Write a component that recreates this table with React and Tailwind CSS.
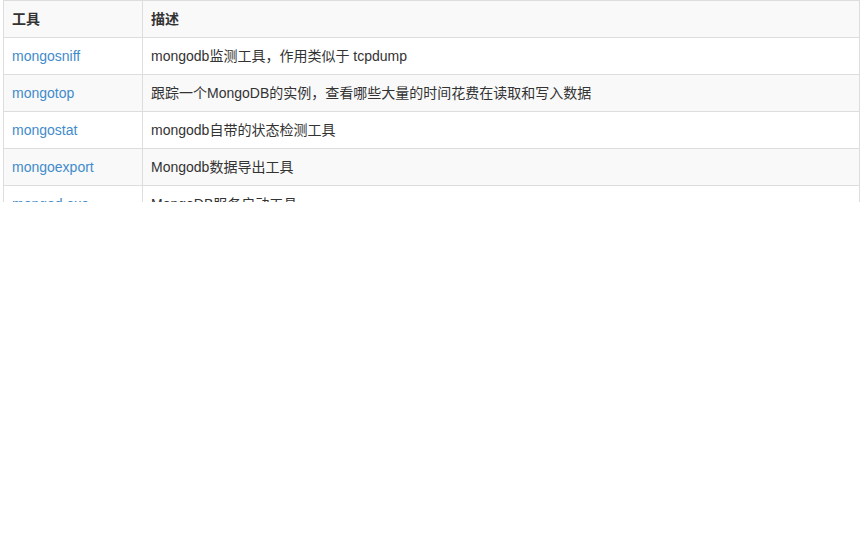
const rows = [
  { tool: 'mongosniff', desc: 'mongodb监测工具，作用类似于 tcpdump' },
  { tool: 'mongotop', desc: '跟踪一个MongoDB的实例，查看哪些大量的时间花费在读取和写入数据' },
  { tool: 'mongostat', desc: 'mongodb自带的状态检测工具' },
  { tool: 'mongoexport', desc: 'Mongodb数据导出工具' },
  { tool: 'mongod.exe', desc: 'MongoDB服务启动工具' },
];

export default function App() {
  return (
    <div className="w-[860px] h-[560px] bg-white">
      <div
        className="h-[202px] overflow-hidden pl-[3px] text-[14px] text-[#333]"
        style={{ fontFamily: '"Liberation Sans", "Noto Sans CJK SC", sans-serif' }}
      >
        <table className="w-[857px] border-collapse border border-[#ddd]">
          <thead>
            <tr className="bg-[#f9f9f9]">
              <th className="w-[139px] border border-[#ddd] px-2 py-2 text-left font-bold leading-5">工具</th>
              <th className="border border-[#ddd] px-2 py-2 text-left font-bold leading-5">描述</th>
            </tr>
          </thead>
          <tbody>
            {rows.map((r, i) => (
              <tr key={r.tool} className={i % 2 === 1 ? 'bg-[#f9f9f9]' : 'bg-white'}>
                <td className="border border-[#ddd] px-2 py-2 leading-5">
                  <a className="text-[#428bca]">{r.tool}</a>
                </td>
                <td className="border border-[#ddd] px-2 py-2 leading-5">{r.desc}</td>
              </tr>
            ))}
          </tbody>
        </table>
      </div>
    </div>
  );
}
